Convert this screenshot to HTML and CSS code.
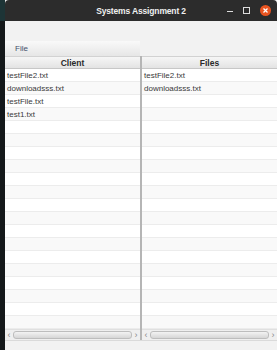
FILE: index.html
```html
<!DOCTYPE html>
<html>
	<head>
		<meta charset="utf-8" />
		<title>Systems Assignment 2</title>
		<link rel="stylesheet" href="styles.css">
	</head>
	<body>
		<div id="desk">
			<div id="window">
				<div id="titlebar">
					<span class="title">Systems Assignment 2</span>
					<div class="controls">
						<span class="min"></span>
						<span class="max"></span>
						<span class="close">
							<svg width="11" height="11" viewBox="0 0 11 11"><circle cx="5.5" cy="5.5" r="5.5" fill="#e95420" /><path d="M3.5 3.5 L7.5 7.5 M7.5 3.5 L3.5 7.5" stroke="#fff" stroke-width="1.3" /></svg>
						</span>
					</div>
				</div>
				<div id="content">
					<div class="spacer"></div>
					<div class="menubar"><span class="menu">File</span></div>
					<div class="split">
						<div class="table">
							<div class="head">Client</div>
							<div class="rows">
								<div class="row">testFile2.txt</div>
								<div class="row">downloadsss.txt</div>
								<div class="row">testFile.txt</div>
								<div class="row">test1.txt</div>
								<div class="row"></div><div class="row"></div><div class="row"></div><div class="row"></div><div class="row"></div><div class="row"></div>
								<div class="row"></div><div class="row"></div><div class="row"></div><div class="row"></div><div class="row"></div><div class="row"></div>
								<div class="row"></div><div class="row"></div><div class="row"></div><div class="row"></div>
							</div>
							<div class="hscroll">
								<span class="arrow">&lsaquo;</span>
								<span class="track"></span>
								<span class="arrow">&rsaquo;</span>
							</div>
						</div>
						<div class="divider"></div>
						<div class="table">
							<div class="head">Files</div>
							<div class="rows">
								<div class="row">testFile2.txt</div>
								<div class="row">downloadsss.txt</div>
								<div class="row"></div><div class="row"></div>
								<div class="row"></div><div class="row"></div><div class="row"></div><div class="row"></div><div class="row"></div><div class="row"></div>
								<div class="row"></div><div class="row"></div><div class="row"></div><div class="row"></div><div class="row"></div><div class="row"></div>
								<div class="row"></div><div class="row"></div><div class="row"></div><div class="row"></div>
							</div>
							<div class="hscroll">
								<span class="arrow">&lsaquo;</span>
								<span class="track"></span>
								<span class="arrow">&rsaquo;</span>
							</div>
						</div>
					</div>
					<div class="footer"></div>
				</div>
			</div>
		</div>
	</body>
</html>
```
FILE: styles.css
```css
html, body {
	margin: 0; padding: 0;
	background-color: #15191b;
	font: 8px "Liberation Sans", Arial, sans-serif;
	overflow: hidden;
}
#desk {
	width: 277px; height: 350px;
	background: linear-gradient(to bottom, #1d3436 0, #1d3436 21px, #14181a 21px);
}
#window {
	margin-left: 5px;
	width: 272px; height: 347px;
	display: flex; flex-direction: column;
	background-color: #f2f2f2;
}
#titlebar {
	height: 21px; flex: none;
	background-color: #2c2c2c;
	border-radius: 4px 4px 0 0;
	display: flex; align-items: center; justify-content: center;
	position: relative;
}
.title {
	color: #f0f0f0;
	font: bold 8.5px "Liberation Sans", sans-serif;
	letter-spacing: -0.15px;
	padding-top: 1px;
}
.controls {
	position: absolute;
	right: 6px; top: 5px;
	display: flex; align-items: center; gap: 9px;
	height: 11px;
}
.min {
	width: 6px; height: 1px;
	background-color: #ddd;
	margin-top: 2px;
}
.max {
	width: 5px; height: 5px;
	border: 1px solid #ddd;
	margin: 0 1px;
}
.close svg { display: block; }
#content {
	flex: 1;
	display: flex; flex-direction: column;
}
.spacer { height: 20px; flex: none; }
.menubar {
	width: 135px; height: 15px; flex: none;
	background: linear-gradient(to bottom, #f9f9f9, #e6e6e6);
	display: flex; align-items: center;
}
.menu {
	margin-left: 10px;
	color: #43506a;
}
.split {
	flex: 1;
	display: flex;
	min-height: 0;
}
.table {
	flex: 1;
	display: flex; flex-direction: column;
	background-color: #fff;
	min-width: 0;
}
.divider {
	width: 2px;
	background-color: #b5b5b5;
	flex: none;
}
.head {
	height: 13px; flex: none;
	box-sizing: border-box;
	background: linear-gradient(to bottom, #f6f6f6, #e3e3e3);
	border-bottom: 1px solid #c7c7c7;
	border-top: 1px solid #d2d2d2;
	text-align: center;
	font-weight: bold;
	font-size: 8.5px;
	color: #2a2a2a;
	line-height: 12px;
}
.rows {
	flex: 1;
	overflow: hidden;
}
.row {
	height: 13px;
	box-sizing: border-box;
	border-bottom: 1px solid #ececec;
	padding: 1px 0 0 2px;
	line-height: 12px;
	color: #3a3a3a;
}
.row:nth-child(even) { background-color: #f9f9f9; }
.hscroll {
	height: 10px; flex: none;
	background-color: #efefef;
	display: flex; align-items: center;
	border-top: 1px solid #e0e0e0;
	padding: 0 1px;
}
.arrow {
	width: 6px;
	color: #888;
	font-size: 9px;
	line-height: 8px;
	text-align: center;
}
.track {
	flex: 1;
	height: 6px;
	margin: 0 1px;
	border: 1px solid #bdbdbd;
	border-radius: 3px;
	background: linear-gradient(to bottom, #f3f3f3, #d6d6d6);
}
.footer {
	height: 20px; flex: none;
	border-top: 1px solid #dadada;
	background-color: #f2f2f2;
}
```
